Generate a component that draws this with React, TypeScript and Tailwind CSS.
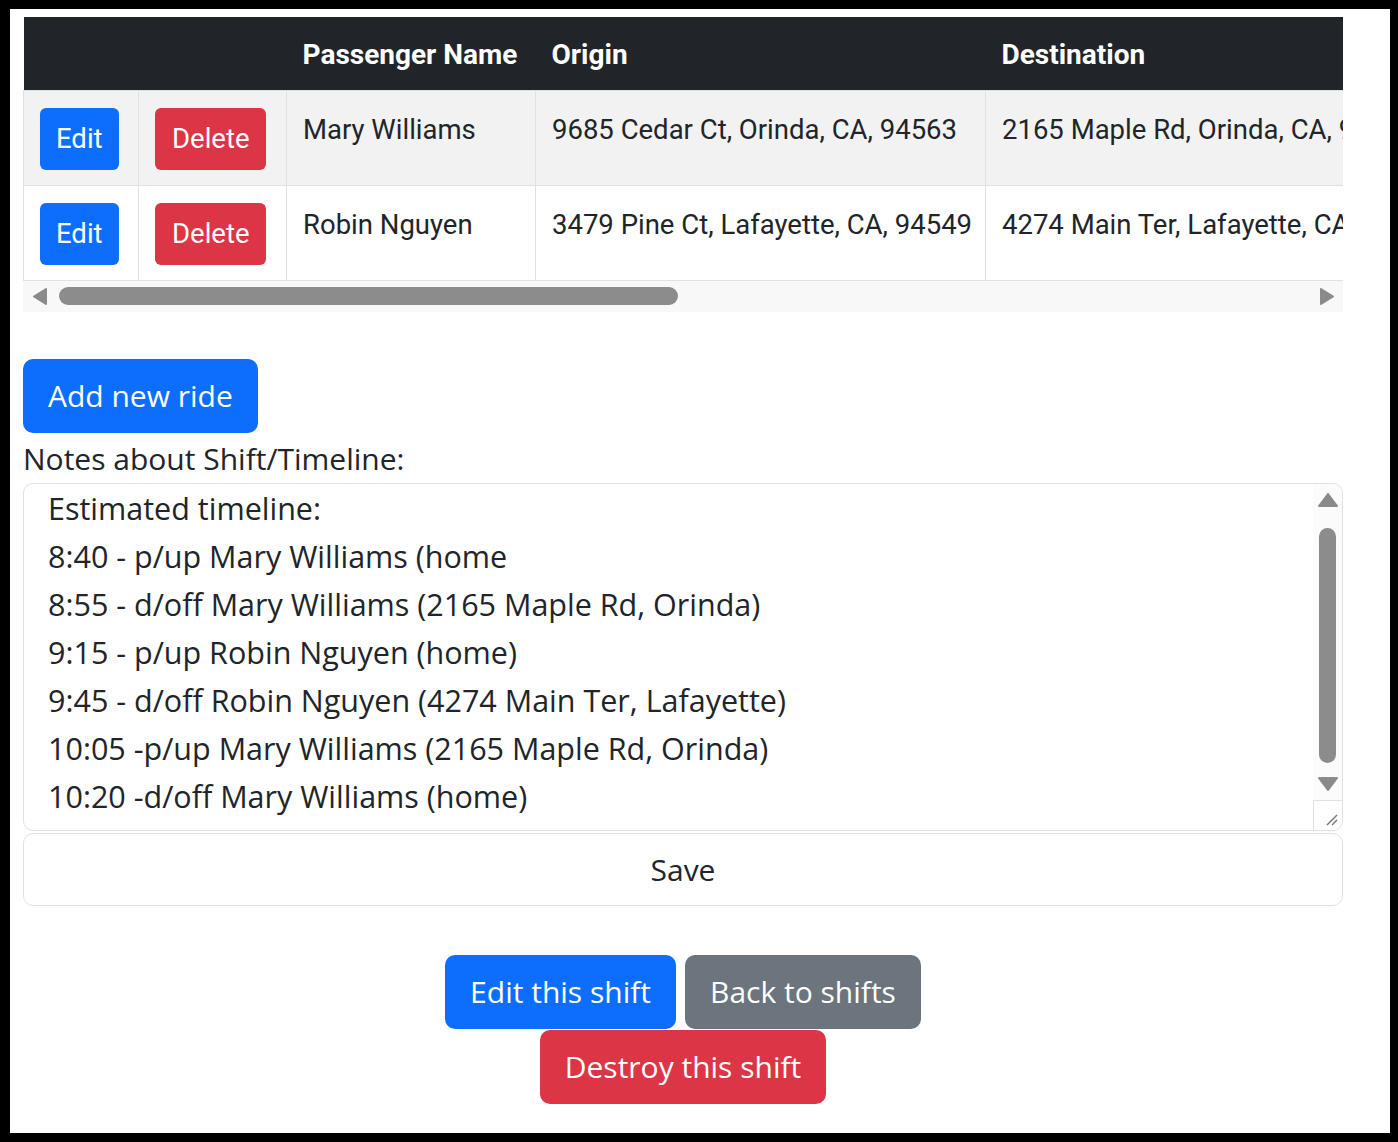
import React from 'react';

const rides = [
  {
    id: 1,
    name: "Mary Williams",
    origin: "9685 Cedar Ct, Orinda, CA, 94563",
    destination: "2165 Maple Rd, Orinda, CA, 94563",
  },
  {
    id: 2,
    name: "Robin Nguyen",
    origin: "3479 Pine Ct, Lafayette, CA, 94549",
    destination: "4274 Main Ter, Lafayette, CA, 94549",
  },
];

const timeline = [
  "Estimated timeline:",
  "8:40 - p/up Mary Williams (home",
  "8:55 - d/off Mary Williams (2165 Maple Rd, Orinda)",
  "9:15 - p/up Robin Nguyen (home)",
  "9:45 - d/off Robin Nguyen (4274 Main Ter, Lafayette)",
  "10:05 -p/up Mary Williams (2165 Maple Rd, Orinda)",
  "10:20 -d/off Mary Williams (home)",
];

const Arrow = ({ dir }: { dir: 'left' | 'right' | 'up' | 'down' }) => {
  const pts = {
    left: "14,1 14,16 2,8.5",
    right: "1,1 1,16 13,8.5",
    up: "10,1 19,13 1,13",
    down: "1,2 19,2 10,14",
  }[dir];
  const size = dir === 'left' || dir === 'right' ? { w: 15, h: 17 } : { w: 20, h: 15 };
  return (
    <svg width={size.w} height={size.h} viewBox={`0 0 ${size.w} ${size.h}`} className="shrink-0">
      <polygon points={pts} fill="#8a8a8a" stroke="#8a8a8a" strokeWidth="2" strokeLinejoin="round" />
    </svg>
  );
};

const RidesTable = () => (
  <div className="w-[1320px]">
    <div className="overflow-hidden">
      <table className="border-collapse table-fixed w-[1432px] font-['Roboto',sans-serif] text-[27.5px] text-[#212529]">
        <colgroup>
          <col className="w-[115px]" />
          <col className="w-[148px]" />
          <col className="w-[249px]" />
          <col className="w-[450px]" />
          <col className="w-[470px]" />
        </colgroup>
        <thead>
          <tr className="bg-[#212529] text-white h-[73px] text-[28px]">
            <th className="border-b border-[#dee2e6]" />
            <th className="border-b border-[#dee2e6]" />
            <th className="border-b border-[#dee2e6] px-4 pb-[14px] align-bottom leading-[42px] text-left font-bold">Passenger Name</th>
            <th className="border-b border-[#dee2e6] px-4 pb-[14px] align-bottom leading-[42px] text-left font-bold">Origin</th>
            <th className="border-b border-[#dee2e6] px-4 pb-[14px] align-bottom leading-[42px] text-left font-bold">Destination</th>
          </tr>
        </thead>
        <tbody>
          {rides.map((ride, i) => (
            <tr key={ride.id} className={i % 2 === 0 ? "bg-[#f2f2f2]" : "bg-white"}>
              <td className="border border-[#dee2e6] px-4 pt-[17px] pb-[15px] align-top">
                <button className="block h-[62px] px-[16px] rounded-[6px] bg-[#0d6efd] text-white leading-[62px]">Edit</button>
              </td>
              <td className="border border-[#dee2e6] px-4 pt-[17px] pb-[15px] align-top">
                <button className="block h-[62px] px-[17px] rounded-[6px] bg-[#dc3545] text-white leading-[62px]">Delete</button>
              </td>
              <td className="border border-[#dee2e6] px-4 pt-4 align-top leading-[46px] whitespace-nowrap">{ride.name}</td>
              <td className="border border-[#dee2e6] px-4 pt-4 align-top leading-[46px] whitespace-nowrap">{ride.origin}</td>
              <td className="border border-[#dee2e6] px-4 pt-4 align-top leading-[46px] whitespace-nowrap">{ride.destination}</td>
            </tr>
          ))}
        </tbody>
      </table>
    </div>
    {/* horizontal scrollbar */}
    <div className="h-[31px] bg-[#f8f8f8] flex items-center pl-[9px] pr-[8px]">
      <Arrow dir="left" />
      <div className="ml-[12px] w-[619px] h-[18px] rounded-full bg-[#8c8c8c]" />
      <div className="ml-auto">
        <Arrow dir="right" />
      </div>
    </div>
  </div>
);

const NotesBox = () => (
  <div className="flex h-[348px] border border-[#dee2e6] rounded-[10px] overflow-hidden bg-white">
    <div className="flex-1 pl-[24px] text-[30.5px] leading-[48px] text-[#212529] overflow-hidden">
      {timeline.map((line, i) => (
        <div key={i} className="whitespace-nowrap">{line}</div>
      ))}
    </div>
    <div className="w-[29px] flex flex-col items-center bg-[#fbfbfb]">
      <div className="pt-[9px]">
        <Arrow dir="up" />
      </div>
      <div className="mt-[20px] w-[17px] h-[235px] rounded-full bg-[#8c8c8c]" />
      <div className="mt-[13px]">
        <Arrow dir="down" />
      </div>
      <div className="mt-auto w-full h-[30px] border-t border-l border-[#dee2e6] bg-white flex items-end justify-end pr-[3px] pb-[3px]">
        <svg width="14" height="14" viewBox="0 0 14 14">
          <line x1="2" y1="12" x2="12" y2="2" stroke="#777" strokeWidth="1.5" />
          <line x1="7" y1="12" x2="12" y2="7" stroke="#777" strokeWidth="1.5" />
        </svg>
      </div>
    </div>
  </div>
);

export default function App() {
  return (
    <div className="h-[1142px] bg-black pl-[10px] pr-[8px] pt-[9px] pb-[9px]">
      <div className="h-full bg-white pl-[13px] pt-[8px] font-['Open_Sans',sans-serif] text-[#212529]">
        <div className="w-[1320px]">
          <RidesTable />

          <button className="block mt-[47px] h-[74px] px-[25px] rounded-[10px] bg-[#0d6efd] text-white text-[30px] leading-[74px]">
            Add new ride
          </button>

          <div className="mt-[2px] text-[30px] leading-[48px]">Notes about Shift/Timeline:</div>

          <NotesBox />

          <button className="block mt-[2px] w-full h-[73px] border border-[#dee2e6] rounded-[10px] bg-white text-[30px] text-[#212529]">
            Save
          </button>

          <div className="mt-[49px] flex flex-col items-center">
            <div className="flex gap-[9px]">
              <button className="h-[74px] px-[25px] rounded-[10px] bg-[#0d6efd] text-white text-[30px]">Edit this shift</button>
              <button className="h-[74px] px-[25px] rounded-[10px] bg-[#6c757d] text-white text-[30px]">Back to shifts</button>
            </div>
            <button className="mt-[1px] h-[74px] px-[25px] rounded-[10px] bg-[#dc3545] text-white text-[30px]">Destroy this shift</button>
          </div>
        </div>
      </div>
    </div>
  );
}
